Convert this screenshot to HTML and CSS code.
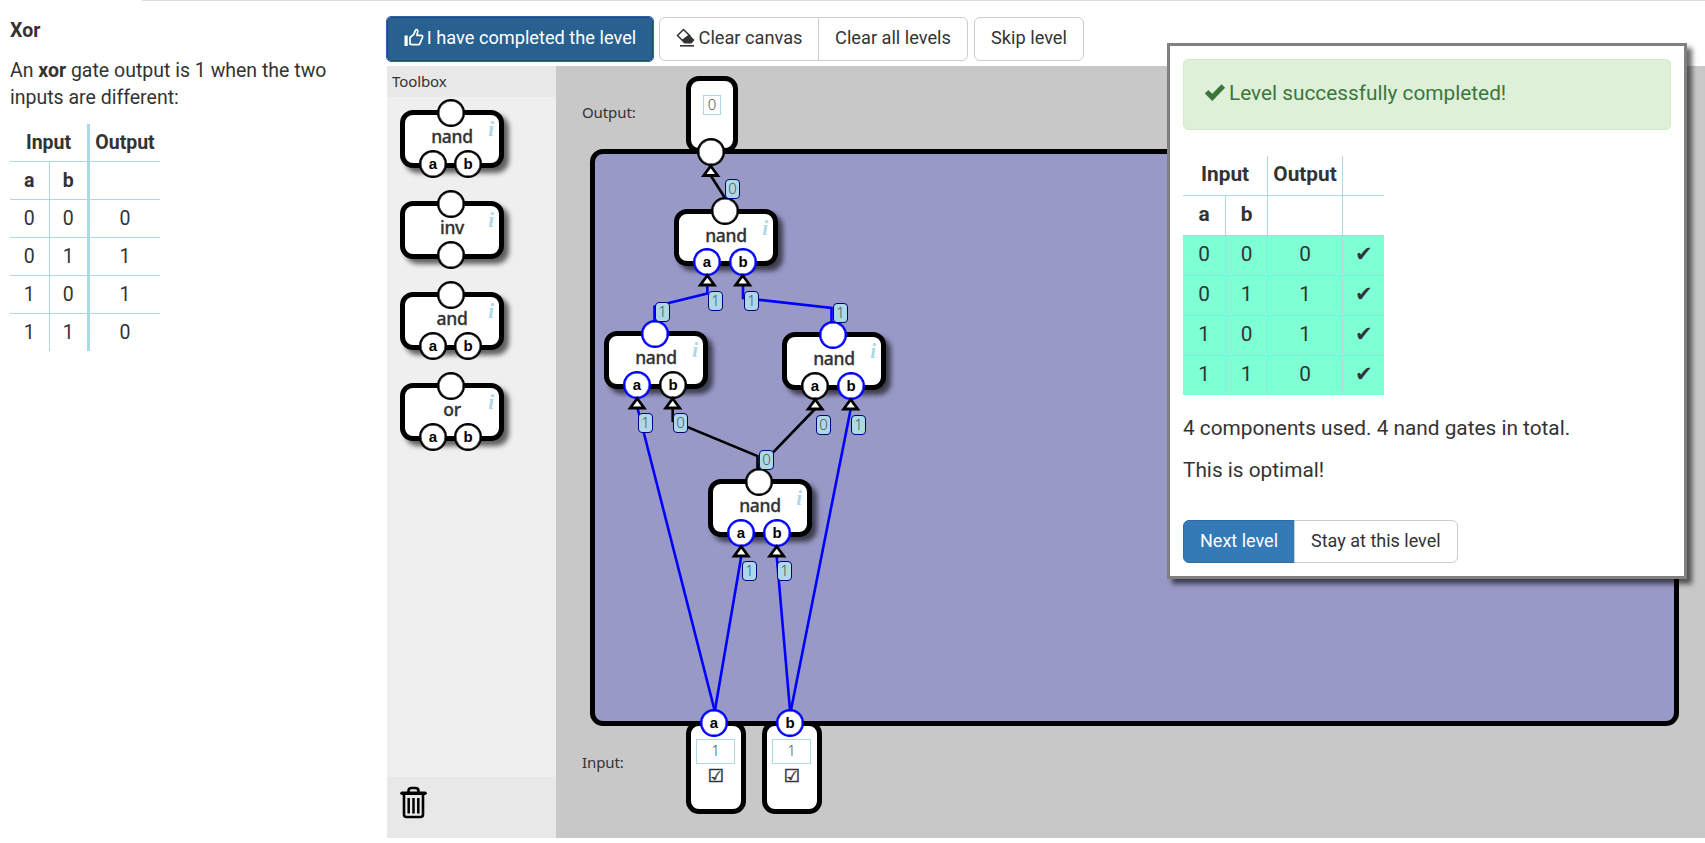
FILE: index.html
```html
<!DOCTYPE html>
<html lang="en">
<head>
<meta charset="utf-8">
<title>Xor</title>
<link rel="stylesheet" href="styles.css">
</head>
<body>
<div class="topline"></div>
<div class="page">
  <aside class="mission">
    <h3>Xor</h3>
    <p>An <b>xor</b> gate output is 1 when the two inputs are different:</p>
    <table class="truth">
      <tr><th colspan="2">Input</th><th class="sep out">Output</th></tr>
      <tr><th class="in">a</th><th class="in">b</th><th class="sep"></th></tr>
      <tr><td>0</td><td>0</td><td class="sep">0</td></tr>
      <tr><td>0</td><td>1</td><td class="sep">1</td></tr>
      <tr><td>1</td><td>0</td><td class="sep">1</td></tr>
      <tr><td>1</td><td>1</td><td class="sep">0</td></tr>
    </table>
  </aside>
  <main class="main">
    <div class="toolbar">
      <button class="btn primary active complete"><svg class="icon" width="20" height="20" viewBox="0 0 20 20"><path d="M.500 7.500h3.200V18H.500z" fill="#fff"/><path d="M6 16.200V9.500l3.800-3.200 1.700-4.100c.8-1.200 2.600-.3 2.300 1.200l-.9 4h4.300c1.300 0 1.700 1 1.300 2l-2.700 6.200c-.3.700-.8 1.100-1.600 1.100H8.500z" fill="none" stroke="#fff" stroke-width="1.700" stroke-linejoin="round"/></svg><span>I have completed the level</span></button>
      <div class="group">
        <button class="btn clear"><svg class="icon" width="20" height="20" viewBox="0 0 20 20"><path d="M7.500 1.500 14 8 8 14 1.500 7.500z" fill="#fff" stroke="#333" stroke-width="1.500"/><path d="M13 6.500 18.500 12l-3 3.500H8.500L5.500 12z" fill="#333"/><path d="M4 17.800h14" stroke="#333" stroke-width="1.600"/></svg><span>Clear canvas</span></button>
        <button class="btn clear-all">Clear all levels</button>
      </div>
      <button class="btn skip">Skip level</button>
    </div>
    <div class="workspace">
      <section class="toolbox">
        <header class="toolbox-head">Toolbox</header>
        <div class="tools">
          <div class="gate"><span class="pin top"></span><span class="name">nand</span><i>i</i><span class="pin a">a</span><span class="pin b">b</span></div>
          <div class="gate"><span class="pin top"></span><span class="name">inv</span><i>i</i><span class="pin mid"></span></div>
          <div class="gate"><span class="pin top"></span><span class="name">and</span><i>i</i><span class="pin a">a</span><span class="pin b">b</span></div>
          <div class="gate"><span class="pin top"></span><span class="name">or</span><i>i</i><span class="pin a">a</span><span class="pin b">b</span></div>
        </div>
        <footer class="trash"><svg width="28" height="33" viewBox="0 0 28 33" fill="none" stroke="#000"><path d="M8.500 7V5q0-3 3-3h4q3 0 3 3v2" stroke-width="2.600"/><path d="M2 7.200h23" stroke-width="3.600" stroke-linecap="round"/><path d="M4 8v20.500q0 2.500 2.500 2.500h14q2.500 0 2.500-2.500V8" stroke-width="2.600"/><path d="M8.700 12v15.500M13.500 12v15.500M18.300 12v15.500" stroke-width="2.500"/></svg></footer>
      </section>
      <section class="canvas">
        <div class="node output" style="left:130px;top:10px"><span class="value">0</span></div>
        <div class="board"></div>
        <div class="node input" style="left:130px;top:655px"><span class="value">1</span><span class="check">☑</span></div>
        <div class="node input" style="left:206px;top:655px"><span class="value">1</span><span class="check">☑</span></div>
        <span class="label" style="top:34px">Output:</span>
        <span class="label" style="top:684px">Input:</span>

        <div class="gate short" style="left:118px;top:143px"><span class="pin top"></span><span class="name">nand</span><i>i</i><span class="pin a on">a</span><span class="pin b on">b</span></div>
        <div class="gate" style="left:48px;top:265px"><span class="pin top on"></span><span class="name">nand</span><i>i</i><span class="pin a on">a</span><span class="pin b">b</span></div>
        <div class="gate" style="left:226px;top:266px"><span class="pin top on"></span><span class="name">nand</span><i>i</i><span class="pin a">a</span><span class="pin b on">b</span></div>
        <div class="gate" style="left:152px;top:413px"><span class="pin top"></span><span class="name">nand</span><i>i</i><span class="pin a on">a</span><span class="pin b on">b</span></div>

        <svg class="wires" viewBox="556 66 1149 772" width="1149" height="772">
          <g class="wire">
            <path d="M725 198 711 176"/>
            <path d="M672.700 408V421L757.500 456V469"/>
            <path d="M815 409 758 468"/>
          </g>
          <g class="wire on">
            <path d="M707.300 285V293.500L654.500 306.500V321"/>
            <path d="M743 285V298L831.500 308V322"/>
            <path d="M637.500 408 714.500 710"/>
            <path d="M850.700 409 791 710"/>
            <path d="M741.300 556 715 710"/>
            <path d="M776.700 556 790 710"/>
          </g>
          <g class="arrow">
            <path d="M710.700 166l-7 9.500h14z"/>
            <path d="M707.300 275.500l-7 9.500h14z"/>
            <path d="M742.700 275.500l-7 9.500h14z"/>
            <path d="M637.200 398.500l-7 9.500h14z"/>
            <path d="M672.700 398.500l-7 9.500h14z"/>
            <path d="M815.200 399.500l-7 9.500h14z"/>
            <path d="M850.700 399.500l-7 9.500h14z"/>
            <path d="M741.200 546.500l-7 9.500h14z"/>
            <path d="M776.700 546.500l-7 9.500h14z"/>
          </g>
        </svg>

        <span class="pin" style="left:141px;top:72px"></span>
        <span class="pin on" style="left:144px;top:643px">a</span>
        <span class="pin on" style="left:220px;top:643px">b</span>

        <span class="bit" style="left:169px;top:113px">0</span>
        <span class="bit" style="left:99px;top:236px">1</span>
        <span class="bit" style="left:277px;top:237px">1</span>
        <span class="bit" style="left:152px;top:225px">1</span>
        <span class="bit" style="left:188px;top:225px">1</span>
        <span class="bit" style="left:82px;top:347px">1</span>
        <span class="bit" style="left:117px;top:347px">0</span>
        <span class="bit" style="left:260px;top:349px">0</span>
        <span class="bit" style="left:295px;top:349px">1</span>
        <span class="bit" style="left:203px;top:384px">0</span>
        <span class="bit" style="left:186px;top:495px">1</span>
        <span class="bit" style="left:221px;top:495px">1</span>
      </section>
    </div>
  </main>
</div>

<div class="dialog">
  <div class="alert"><svg width="22" height="19" viewBox="0 0 22 19"><path d="M.800 10.500 4.300 7l4 3.800L17.500 1.200l3.600 3.500L8.300 18z" fill="#3c763d"/></svg><span>Level successfully completed!</span></div>
  <table class="truth results">
    <tr><th colspan="2">Input</th><th class="out">Output</th><th class="ok"></th></tr>
    <tr><th class="in">a</th><th class="in">b</th><th></th><th></th></tr>
    <tr class="pass"><td>0</td><td>0</td><td>0</td><td>✔</td></tr>
    <tr class="pass"><td>0</td><td>1</td><td>1</td><td>✔</td></tr>
    <tr class="pass"><td>1</td><td>0</td><td>1</td><td>✔</td></tr>
    <tr class="pass"><td>1</td><td>1</td><td>0</td><td>✔</td></tr>
  </table>
  <p>4 components used. 4 nand gates in total.</p>
  <p>This is optimal!</p>
  <div class="group actions">
    <button class="btn primary">Next level</button>
    <button class="btn">Stay at this level</button>
  </div>
</div>
</body>
</html>
```
FILE: styles.css
```css
* { box-sizing: border-box; }
body {
  margin: 0;
  height: 843px;
  overflow: hidden;
  background: #fff;
  color: #333;
  font: 19.500px/27px Roboto, sans-serif;
}
.topline { height: 1px; margin-left: 142px; background: #ddd; }
.page { display: flex; height: 842px; }

.mission { width: 387px; padding: 16px 50px 0 10px; }
.mission h3 { margin: 0 0 13px; font-size: 19.500px; line-height: 27px; font-weight: 700; }
.mission p { margin: 0 0 13px; }

.truth { border-collapse: separate; border-spacing: 0; table-layout: fixed; width: 150px; text-align: center; }
.truth th, .truth td { height: 38px; padding: 0; border-top: 1px solid lightblue; border-left: 1px solid lightblue; }
.truth tr:first-child th { height: 37px; border-top: 0; }
.truth tr > :first-child { border-left: 0; }
.truth .sep { border-left-width: 3px; }
.truth .out { width: 73px; }

.main { flex: 1; display: flex; flex-direction: column; }
.toolbar { display: flex; gap: 6px; height: 65px; padding-top: 16px; }
.group { display: flex; }
.group .btn:first-child { border-radius: 6px 0 0 6px; }
.group .btn:last-child { border-radius: 0 6px 6px 0; margin-left: -1px; }
.btn {
  display: flex;
  align-items: center;
  justify-content: center;
  height: 44px;
  padding: 0 16px 2px;
  border: 1px solid #ccc;
  border-radius: 6px;
  background: #fff;
  color: #333;
  font: 18.200px/26px Roboto, sans-serif;
  white-space: nowrap;
}
.btn.primary { background: #337ab7; border-color: #2e6da4; color: #fff; }
.btn.active { border-radius: 4px; background: #286090; border-color: #204d74; outline: 1px solid #2a62b0; outline-offset: 0; }
.toolbar .btn { padding-left: 0; padding-right: 0; }
.complete { width: 266px; }
.clear { width: 160px; }
.clear-all { width: 150px; }
.skip { width: 110px; }
.icon { margin-right: 3px; }

.workspace { display: flex; height: 772px; }
.toolbox { width: 169px; display: flex; flex-direction: column; background: #efefef; font-family: "Noto Sans", sans-serif; }
.toolbox-head { height: 31px; padding-left: 5px; background: #e8e8e8; font-size: 15px; line-height: 31px; letter-spacing: -.1px; }
.tools { flex: 1; display: flex; flex-direction: column; gap: 33px; padding: 13px; }
.trash { height: 61px; padding: 9px 12.500px; background: #e8e8e8; }

.gate {
  position: relative;
  width: 104px;
  height: 58px;
  border: 5px solid #000;
  border-radius: 13px;
  background: #fff;
  box-shadow: 5px 5px 5px rgba(0, 0, 0, .6);
  text-align: center;
}
.name { display: block; margin-top: 9px; font: 500 17.500px/25px "Noto Sans", sans-serif; letter-spacing: -.3px; -webkit-text-stroke: .300px #333; }
.gate i { position: absolute; right: 5px; top: 4px; font: italic bold 21px/20px "Liberation Serif", serif; color: lightblue; }
.pin {
  position: absolute;
  width: 28px;
  height: 28px;
  border: 2px solid #000;
  border-radius: 50%;
  background: #fff;
  box-shadow: inset 0 0 0 .500px #000;
  color: #000;
  font: bold 15px/24px "Liberation Sans", sans-serif;
  text-align: center;
}
.pin.on { border-color: #00f; box-shadow: inset 0 0 0 .500px #00f; }
.pin.top { left: 32px; top: -16px; }
.pin.a { left: 14px; top: 35px; }
.pin.b { left: 49px; top: 35px; }
.pin.mid { left: 32px; top: 35px; }

.canvas { position: relative; flex: 1; background: #c8c8c8; font-family: "Noto Sans", sans-serif; }
.canvas .gate, .node, .label, .bit, .wires { position: absolute; }
.canvas .pin.b { left: 50px; }
.gate.short { height: 57px; }
.short .pin.top { top: -17px; }
.short .pin.a, .short .pin.b { top: 34px; }
.board { position: absolute; inset: 83px 26px 112px 34px; border: 5px solid #000; border-radius: 13px; background: #9999c8; }
.label { left: 26px; font-size: 15px; line-height: 24px; letter-spacing: -.1px; }
.node { display: flex; flex-direction: column; align-items: center; border: 5px solid #000; border-radius: 13px; background: #fff; }
.node.output { width: 52px; height: 77px; padding-top: 14px; }
.node.input { width: 60px; height: 93px; padding-top: 13px; padding-right: 1px; }
.value { width: 18px; height: 20px; border: 1px solid lightblue; color: #555; font: 300 15px/17px "Noto Sans", sans-serif; text-align: center; }
.input .value { width: 39px; height: 25px; line-height: 21px; }
.check { margin-top: 2px; font: bold 18px/20px "DejaVu Sans", sans-serif; -webkit-text-stroke: .500px #333; }
.wires { left: 0; top: 0; }
.wire path { fill: none; stroke: #000; stroke-width: 2.600; }
.wire.on path { stroke: #00f; }
.arrow path { fill: #fff; stroke: #000; stroke-width: 2.800; }
.bit { width: 15px; height: 20px; border: 1px solid navy; border-radius: 4px; background: lightblue; color: #555; font: 300 15px/17px "Noto Sans", sans-serif; text-align: center; }

.dialog {
  position: absolute;
  left: 1167px;
  top: 43px;
  width: 520px;
  height: 536px;
  padding: 13px;
  border: 3px solid #808080;
  background: #fff;
  box-shadow: 5px 5px 5px rgba(0, 0, 0, .6);
  font-size: 20.800px;
  line-height: 28px;
}
.alert { display: flex; align-items: center; gap: 3px; height: 71px; padding: 0 20px 4px; border: 1px solid #d6e9c6; border-radius: 5px; background: #dff0d8; color: #3c763d; }
.results { width: 201px; margin: 26px 0 19px; font-size: 20.800px; }
.results th, .results td { height: 40px; padding-bottom: 4px; }
.results tr:first-child th { height: 39px; }
.results .out { width: 75px; }
.results .ok { width: 42px; }
.pass { background: #7fffd4; }
.dialog p { margin: 0 0 14px; }
.actions { margin-top: 36px; }
.actions .btn { height: 43px; font-size: 18px; }
```
